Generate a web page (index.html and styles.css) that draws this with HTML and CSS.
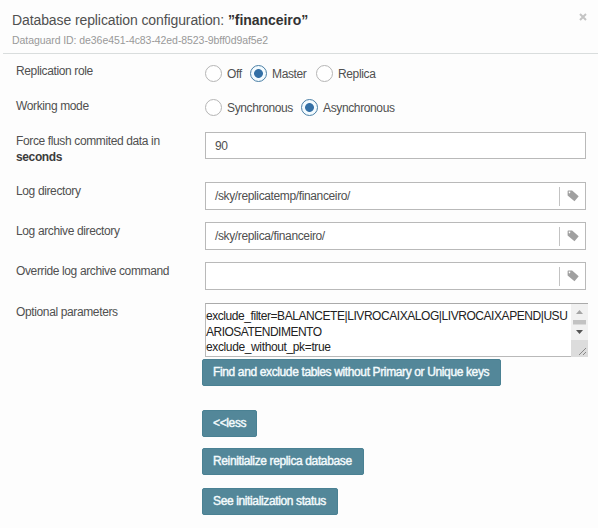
FILE: index.html
```html
<!DOCTYPE html>
<html lang="en">
<head>
<meta charset="utf-8">
<title>Database replication configuration</title>
<link rel="stylesheet" href="styles.css">
</head>
<body>
<svg class="defs" width="0" height="0" aria-hidden="true">
  <symbol id="tag" viewBox="0 0 12 12">
    <path fill-rule="evenodd" d="M1.200.5h3.900L11.700 6.200 7.500 11.200.600 5.500V1.300Q.6.5 1.200.5ZM2.500 1.600a.8.8 0 1 0 .01 0Z"/>
  </symbol>
</svg>
<main class="dialog">
  <header class="head">
    <div class="heading">
      <h1 class="title"><span class="title-text">Database replication configuration:</span> <b class="title-name">”financeiro”</b></h1>
      <p class="sub">Dataguard ID: de36e451-4c83-42ed-8523-9bff0d9af5e2</p>
    </div>
    <svg class="close" viewBox="0 0 8 8"><path d="M1 1l6 6M7 1L1 7"/></svg>
  </header>
  <form class="form">
    <div class="row role">
      <span class="label">Replication role</span>
      <div class="radios"><i class="radio"></i><span class="opt off">Off</span><i class="radio on"></i><span class="opt master">Master</span><i class="radio"></i><span class="opt">Replica</span></div>
    </div>
    <div class="row mode">
      <span class="label">Working mode</span>
      <div class="radios"><i class="radio"></i><span class="opt sync">Synchronous</span><i class="radio on"></i><span class="opt">Asynchronous</span></div>
    </div>
    <div class="row flush">
      <span class="label">Force flush commited data in<br><b>seconds</b></span>
      <div class="field short"><span class="value">90</span></div>
    </div>
    <div class="row">
      <span class="label">Log directory</span>
      <div class="field"><span class="value">/sky/replicatemp/financeiro/</span><span class="addon"><svg class="tag"><use href="#tag"/></svg></span></div>
    </div>
    <div class="row">
      <span class="label">Log archive directory</span>
      <div class="field"><span class="value">/sky/replica/financeiro/</span><span class="addon"><svg class="tag"><use href="#tag"/></svg></span></div>
    </div>
    <div class="row override">
      <span class="label">Override log archive command</span>
      <div class="field"><span class="value"></span><span class="addon"><svg class="tag"><use href="#tag"/></svg></span></div>
    </div>
    <div class="row params">
      <span class="label">Optional parameters</span>
      <div class="area">
        <div class="lines"><span class="line1">exclude_filter=BALANCETE|LIVROCAIXALOG|LIVROCAIXAPEND|USU</span><br><span class="line2">ARIOSATENDIMENTO</span><br><span class="line3">exclude_without_pk=true</span></div>
        <div class="scroll">
          <svg class="track" viewBox="0 0 17 36"><path class="up" d="M5 10l3.500-4 3.500 4z"/><path class="thumb" d="M2 16h13v4.500H2z"/><path class="down" d="M5 26h7l-3.500 4z"/></svg>
          <svg class="grip" viewBox="0 0 17 17"><path d="M8 15l7-7M12 15l3-3"/></svg>
        </div>
      </div>
    </div>
    <div class="actions">
      <span class="btn find">Find and exclude tables without Primary or Unique keys</span>
      <span class="btn less">&lt;&lt;less</span>
      <span class="btn reinit">Reinitialize replica database</span>
      <span class="btn status">See initialization status</span>
    </div>
  </form>
</main>
</body>
</html>
```
FILE: styles.css
```css
* { box-sizing: border-box; }
body {
  margin: 0;
  background: #fdfdfd;
  color: #505050;
  font: 12px/16px "Liberation Sans", Arial, sans-serif;
  letter-spacing: -0.37px;
}
.defs { display: block; }
.dialog { width: 598px; height: 528px; overflow: hidden; }
.head {
  display: flex;
  justify-content: space-between;
  height: 54px;
  margin-left: 3px;
  padding: 10px 9px 0;
  border-bottom: 1px solid #d9dddd;
}
.title { margin: 0; font-size: 14px; line-height: 20px; font-weight: 400; white-space: nowrap; letter-spacing: -0.1px; }
.title-name { color: #333; letter-spacing: -0.05px; }
.sub { margin: 2px 0 0; font-size: 10.5px; line-height: 16px; letter-spacing: -0.07px; color: #999; white-space: nowrap; }
.close { width: 8px; height: 8px; margin: 3px 2px 0 0; fill: none; stroke: #c4c4c4; stroke-width: 2; }
.form { display: flex; flex-direction: column; padding-top: 8px; }
.row {
  display: grid;
  grid-template-columns: 189px 381px;
  align-items: start;
  height: 40px;
  padding-left: 16px;
}
.role, .mode { height: 35px; }
.flush { height: 50px; }
.override { height: 41px; }
.label { padding-top: 1px; white-space: nowrap; }
.label b { color: #3c3c3c; }
.radios { display: flex; align-items: center; height: 17px; margin-top: 3px; white-space: nowrap; }
.mode .radios { margin-top: 2px; }
.radio {
  flex: none;
  width: 17px;
  height: 17px;
  margin-right: 5px;
  border: 1px solid #b5b5b5;
  border-radius: 50%;
  background: #fff;
}
.radio.on { border-color: #4a7fa5; background: radial-gradient(circle, #3470a6 0 4px, #f3fbff 4.8px); }
.off { width: 23px; }
.master { width: 44px; }
.sync { width: 74px; }
.field {
  display: flex;
  align-items: center;
  height: 28px;
  border: 1px solid #b9b9b9;
  background: #fff;
}
.field.short { height: 27px; }
.value { flex: 1; padding-left: 9px; white-space: nowrap; }
.addon { display: flex; align-items: center; width: 26px; height: 19px; padding-left: 7px; border-left: 1px solid #c3c3c3; }
.tag { width: 12px; height: 12px; fill: #a0a0a0; }
.params { height: 56px; grid-template-columns: 189px 383px; }
.area {
  display: flex;
  height: 54px;
  border: 1px solid #b9b9b9;
  border-top-color: #aaa;
  border-right: 0;
  background: #fff;
}
.lines { flex: 1; min-width: 0; padding-top: 5px; line-height: 15.5px; letter-spacing: -0.44px; color: #222; white-space: nowrap; }
.line2 { letter-spacing: -0.5px; }
.line3 { letter-spacing: -0.37px; }
.scroll { flex: none; width: 17px; background: #f1f1f1; }
.track { display: block; width: 17px; height: 36px; }
.up { fill: #a5a5a5; }
.down { fill: #555; }
.thumb { fill: #c2c2c2; }
.grip { display: block; width: 17px; height: 17px; background: #dcdcdc; fill: none; stroke: #888; }
.actions { display: flex; flex-direction: column; align-items: flex-start; padding-left: 202px; }
.btn {
  height: 27px;
  padding-left: 10px;
  border: 1px solid #4a8193;
  border-radius: 2px;
  background: #538799;
  color: #f4fbfd;
  -webkit-text-stroke: 0.4px #f4fbfd;
  line-height: 25px;
  white-space: nowrap;
}
.find { width: 299px; }
.less { width: 55px; margin-top: 24px; }
.reinit { width: 162px; margin-top: 11px; }
.status { width: 136px; margin-top: 13px; }
```
